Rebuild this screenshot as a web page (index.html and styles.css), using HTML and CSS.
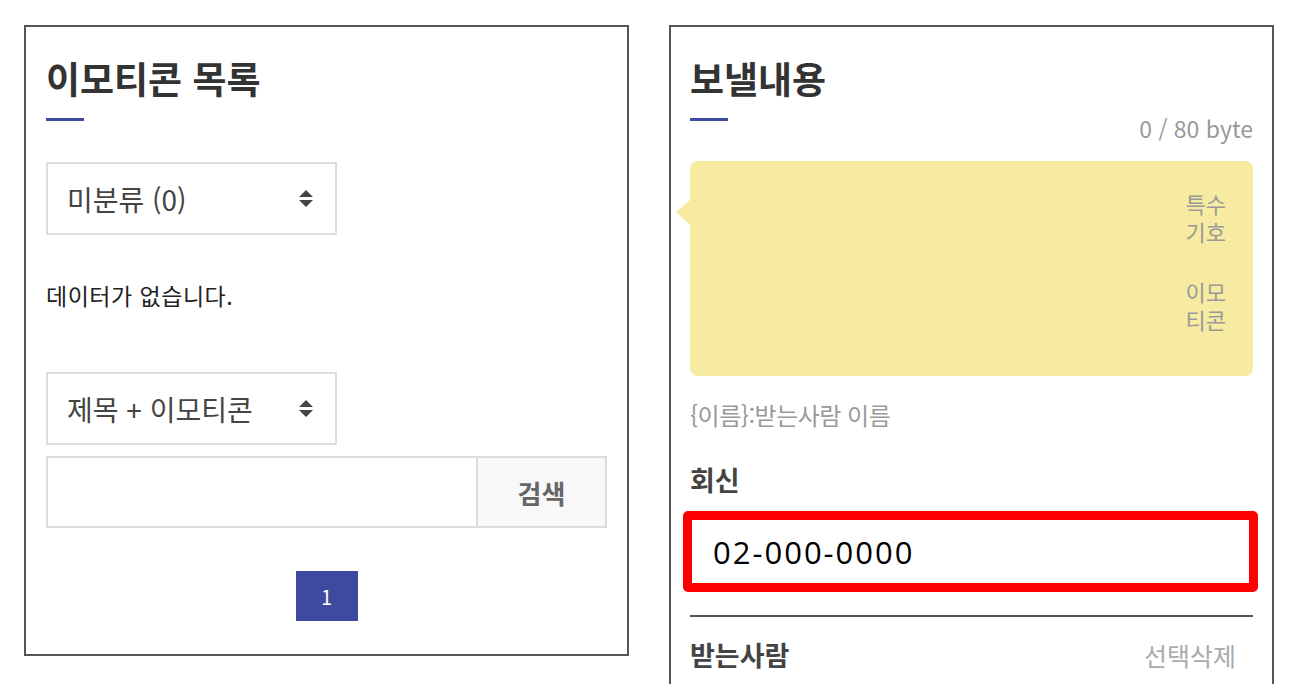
FILE: index.html
```html
<!DOCTYPE html>
<html lang="ko">
<head>
    <meta charset="UTF-8">
    <meta name="viewport" content="width=device-width, initial-scale=1.0">
    <title>문자 보내기</title>
    <link rel="stylesheet" href="styles.css">
</head>
<body>
    <div class="wrap">
        <section class="panel">
            <h2 class="title">이모티콘 목록</h2>
            <div class="title-bar"></div>

            <div class="select select-first">
                <span>미분류 (0)</span>
                <svg class="arrows" width="14" height="17" viewBox="0 0 14 17"><path d="M7 0L14 7H0Z M0 10H14L7 17Z" fill="#444"/></svg>
            </div>

            <p class="empty">데이터가 없습니다.</p>

            <div class="select select-second">
                <span>제목 + 이모티콘</span>
                <svg class="arrows" width="14" height="17" viewBox="0 0 14 17"><path d="M7 0L14 7H0Z M0 10H14L7 17Z" fill="#444"/></svg>
            </div>
            <form class="search">
                <input type="text" class="search-input">
                <button type="button" class="search-btn">검색</button>
            </form>

            <div class="pager">
                <span class="page">1</span>
            </div>
        </section>

        <section class="panel panel-right">
            <h2 class="title">보낼내용</h2>
            <div class="title-bar"></div>
            <div class="counter">0 / 80 byte</div>

            <div class="message">
                <textarea class="message-text"></textarea>
                <div class="tools">
                    <span class="tool">특수<br>기호</span>
                    <span class="tool">이모<br>티콘</span>
                </div>
            </div>

            <p class="hint">{이름}:받는사람 이름</p>

            <div class="label">회신</div>
            <div class="reply">02-000-0000</div>

            <div class="divider"></div>
            <div class="recipients">
                <span class="label">받는사람</span>
                <span class="delete">선택삭제</span>
            </div>
        </section>
    </div>
</body>
</html>
```

FILE: styles.css
```css
body {
    margin: 0;
    background: #fff;
    font-family: "Noto Sans CJK KR", "Noto Sans", sans-serif;
    color: #333;
}
.wrap {
    display: flex;
    align-items: flex-start;
    gap: 40px;
    padding: 25px 0 0 24px;
}
.panel {
    box-sizing: border-box;
    width: 605px;
    border: 2px solid #555;
    padding: 30px 20px 33px;
    flex-shrink: 0;
}
.panel-right {
    padding: 30px 19px 80px;
}
.title {
    margin: 0;
    font-size: 37px;
    font-weight: 700;
    line-height: 42px;
    color: #333;
}
.title-bar {
    width: 38px;
    height: 3px;
    margin-top: 19px;
    background: #3d4aa0;
}

/* left */
.select {
    box-sizing: border-box;
    display: flex;
    align-items: center;
    justify-content: space-between;
    width: 291px;
    height: 73px;
    padding: 0 22px 0 19px;
    border: 2px solid #ddd;
    font-size: 28px;
    color: #444;
}
.select-first {
    margin-top: 41px;
}
.select-second {
    margin-top: 62px;
}
.empty {
    margin: 45px 0 0;
    font-size: 23px;
    line-height: 30px;
    letter-spacing: 0.5px;
    color: #222;
}
.search {
    display: flex;
    height: 72px;
    margin: 11px 0 0;
}
.search-input {
    flex: 1;
    box-sizing: border-box;
    height: 72px;
    margin: 0;
    border: 2px solid #ddd;
    border-right: none;
    outline: none;
}
.search-btn {
    width: 131px;
    height: 72px;
    border: 2px solid #ddd;
    background: #f8f8f8;
    font-family: inherit;
    font-size: 26px;
    font-weight: 700;
    color: #666;
}
.pager {
    display: flex;
    justify-content: center;
    margin-top: 43px;
}
.page {
    display: flex;
    align-items: center;
    justify-content: center;
    width: 62px;
    height: 50px;
    background: #3d4aa0;
    color: #fff;
    font-size: 20px;
}

/* right */
.counter {
    margin-top: -5px;
    text-align: right;
    font-size: 23px;
    line-height: 24px;
    color: #999;
}
.message {
    position: relative;
    display: flex;
    box-sizing: border-box;
    height: 215px;
    margin-top: 21px;
    padding: 28px 27px 0 0;
    background: #f7eba1;
    border-radius: 8px;
}
.message::before {
    content: "";
    position: absolute;
    left: -14px;
    top: 39px;
    border-right: 14px solid #f7eba1;
    border-top: 12px solid transparent;
    border-bottom: 13px solid transparent;
}
.message-text {
    flex: 1;
    border: none;
    background: transparent;
    resize: none;
    outline: none;
}
.tools {
    display: flex;
    flex-direction: column;
    gap: 32px;
    width: 44px;
}
.tool {
    font-size: 22px;
    line-height: 28px;
    color: #999;
    text-align: right;
}
.hint {
    margin: 24px 0 0;
    font-size: 24px;
    line-height: 30px;
    letter-spacing: -0.5px;
    color: #999;
}
.label {
    margin-top: 35px;
    font-size: 27px;
    font-weight: 700;
    line-height: 30px;
    color: #444;
}
.reply {
    box-sizing: border-box;
    display: flex;
    align-items: center;
    height: 81px;
    margin: 16px -5px 0 -7px;
    padding-left: 21px;
    border: 9px solid #ff0000;
    border-radius: 5px;
    font-family: "Open Sans", sans-serif;
    font-size: 31px;
    letter-spacing: 2px;
    color: #000;
}
.divider {
    height: 2px;
    margin-top: 23px;
    background: #555;
}
.recipients {
    display: flex;
    align-items: center;
    justify-content: space-between;
    margin-top: 23px;
}
.recipients .label {
    margin-top: 0;
}
.delete {
    padding-right: 17px;
    font-size: 25px;
    line-height: 30px;
    color: #aaa;
}
```
